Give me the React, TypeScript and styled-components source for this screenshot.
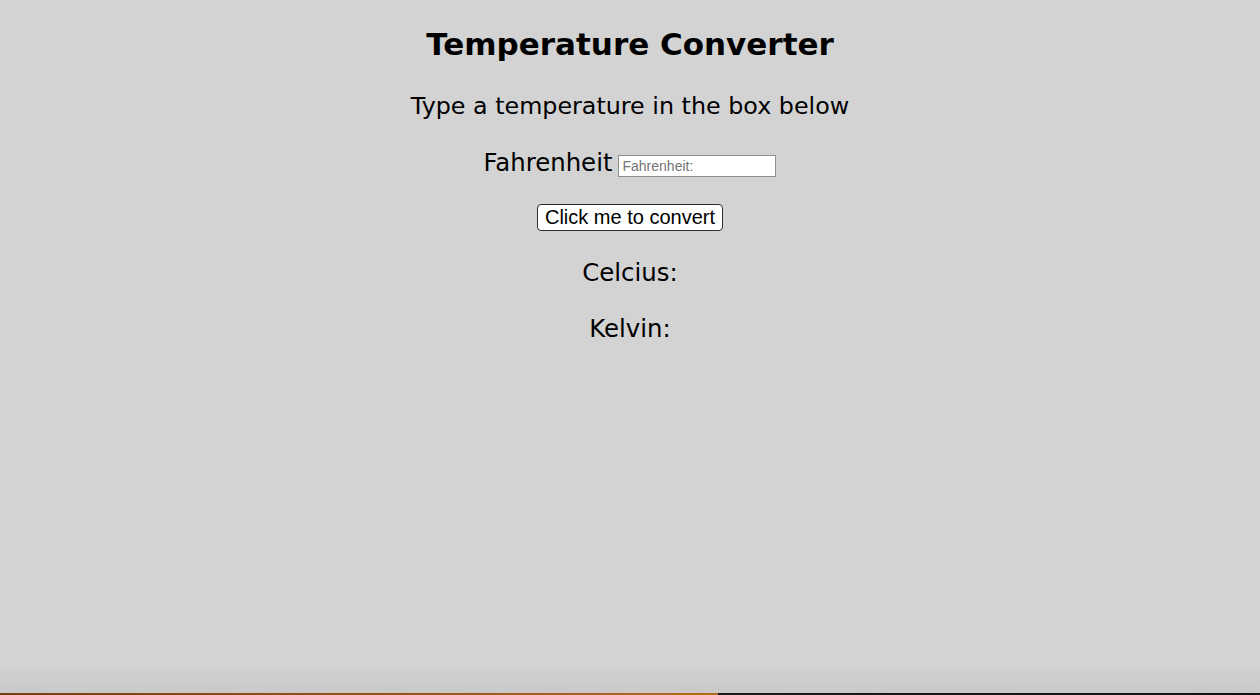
import React from "react";
import styled, { createGlobalStyle } from "styled-components";

const Global = createGlobalStyle`
  html, body { margin: 0; padding: 0; height: 100%; }
  body { background: #d3d3d3; font-family: "DejaVu Sans", "Liberation Sans", sans-serif; color: #000; }
  #root { height: 100%; }
`;

const Page = styled.div`
  height: 100%;
  display: flex;
  flex-direction: column;
`;

const Main = styled.main`
  flex: 1;
  display: flex;
  flex-direction: column;
  align-items: center;
  padding-top: 16px;
`;

const Row = styled.div<{ $h: number }>`
  height: ${(p) => p.$h}px;
  display: flex;
  align-items: center;
  justify-content: center;
  gap: 6px;
`;

const Title = styled.h1`
  margin: 0;
  font-size: 31px;
  font-weight: bold;
`;

const Subtitle = styled.h2`
  margin: 6px 0 0;
  font-size: 23.8px;
  font-weight: normal;
`;

const Label = styled.span`
  font-size: 24.4px;
`;

const Input = styled.input`
  box-sizing: border-box;
  width: 158px;
  height: 22px;
  border: 1px solid #8f8f8f;
  background: #fff;
  padding: 1px 3px;
  font-family: "Liberation Sans", Arial, sans-serif;
  font-size: 14px;
  margin-top: 7px;
  &::placeholder { color: #757575; }
`;

const Button = styled.button`
  box-sizing: border-box;
  height: 27px;
  padding: 0 7px;
  background: #fff;
  border: 1px solid #2e2e2e;
  border-radius: 4px;
  font-family: "Liberation Sans", Arial, sans-serif;
  font-size: 20px;
  color: #000;
`;

const Result = styled.p`
  margin: 0;
  font-size: 24.4px;
`;

const BottomEdge = styled.div`
  height: 30px;
  background: linear-gradient(#d3d3d3, #c9c9c9);
  border-bottom: 2px solid;
  border-image: linear-gradient(90deg, #7a3d0c 0%, #a35a16 40%, #b86a1f 57%, #1a1a1a 57%, #111 100%) 1;
`;

export default function App() {
  return (
    <Page>
      <Global />
      <Main>
        <Row $h={56}>
          <Title>Temperature Converter</Title>
        </Row>
        <Row $h={62}>
          <Subtitle>Type a temperature in the box below</Subtitle>
        </Row>
        <Row $h={56}>
          <Label>Fahrenheit</Label>
          <Input placeholder="Fahrenheit:" />
        </Row>
        <Row $h={54}>
          <Button>Click me to convert</Button>
        </Row>
        <Row $h={56}>
          <Result>Celcius:</Result>
        </Row>
        <Row $h={56}>
          <Result>Kelvin:</Result>
        </Row>
      </Main>
      <BottomEdge />
    </Page>
  );
}
